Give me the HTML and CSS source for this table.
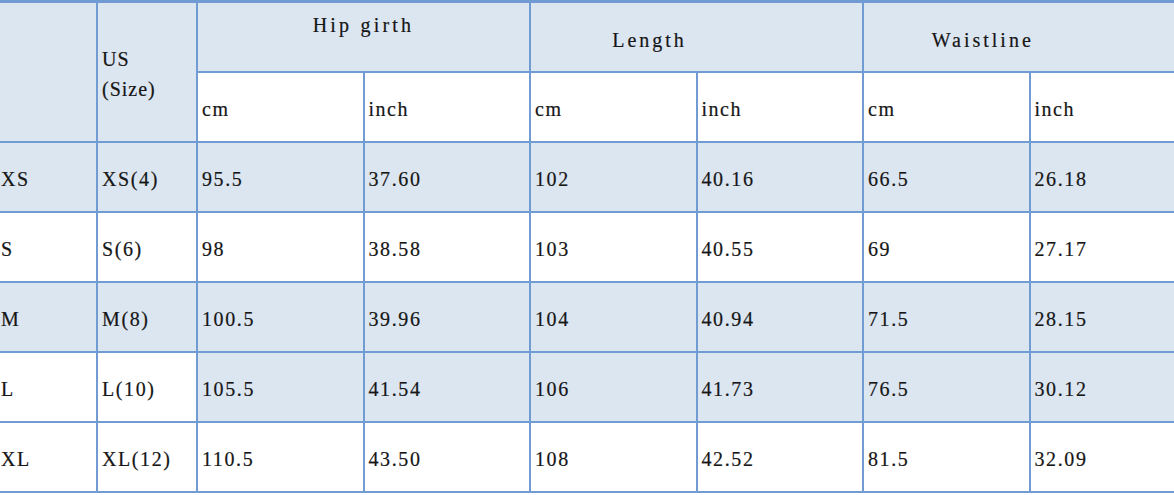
FILE: index.html
```html
<!DOCTYPE html>
<html>
<head>
<meta charset="utf-8">
<title>Size chart</title>
<link rel="stylesheet" href="styles.css">
</head>
<body>
<table class="chart">
  <colgroup>
    <col class="c-size">
    <col class="c-us">
    <col class="c-num"><col class="c-num">
    <col class="c-num"><col class="c-num">
    <col class="c-num"><col class="c-last">
  </colgroup>
  <thead>
    <tr>
      <th rowspan="2" class="shade"></th>
      <th rowspan="2" class="shade us">US<br>(Size)</th>
      <th colspan="2" class="shade group hip">Hip girth</th>
      <th colspan="2" class="shade group offset">Length</th>
      <th colspan="2" class="shade group offset">Waistline</th>
    </tr>
    <tr>
      <th class="unit">cm</th><th class="unit">inch</th>
      <th class="unit">cm</th><th class="unit">inch</th>
      <th class="unit">cm</th><th class="unit">inch</th>
    </tr>
  </thead>
  <tbody>
    <tr class="shade">
      <td>XS</td><td>XS(4)</td><td>95.5</td><td>37.60</td><td>102</td><td>40.16</td><td>66.5</td><td>26.18</td>
    </tr>
    <tr>
      <td>S</td><td>S(6)</td><td>98</td><td>38.58</td><td>103</td><td>40.55</td><td>69</td><td>27.17</td>
    </tr>
    <tr class="shade">
      <td>M</td><td>M(8)</td><td>100.5</td><td>39.96</td><td>104</td><td>40.94</td><td>71.5</td><td>28.15</td>
    </tr>
    <tr>
      <td>L</td><td>L(10)</td><td class="shade">105.5</td><td class="shade">41.54</td><td class="shade">106</td><td class="shade">41.73</td><td class="shade">76.5</td><td class="shade">30.12</td>
    </tr>
    <tr>
      <td>XL</td><td>XL(12)</td><td>110.5</td><td>43.50</td><td>108</td><td>42.52</td><td>81.5</td><td>32.09</td>
    </tr>
  </tbody>
</table>
</body>
</html>
```

FILE: styles.css
```css
html, body {
  margin: 0;
  padding: 0;
  background: #ffffff;
  overflow: hidden;
}

body {
  width: 1174px;
  height: 495px;
}

.chart {
  border-collapse: collapse;
  table-layout: fixed;
  width: 1200px;
  margin-left: -5px;
  font-family: "Liberation Serif", "Times New Roman", serif;
  font-size: 20px;
  letter-spacing: 1.6px;
  color: #161616;
  -webkit-text-stroke: 0.2px #161616;
}

.c-size { width: 101px; }
.c-us { width: 100px; }
.c-num { width: 166.5px; }
.c-last { width: 167px; }

.chart tr {
  height: 70px;
}

.chart th,
.chart td {
  border: 2px solid #719cd3;
  padding: 6px 0 0 5px;
  text-align: left;
  vertical-align: middle;
  font-weight: normal;
  white-space: nowrap;
  overflow: hidden;
}

.chart thead tr:first-child th {
  border-top-width: 3px;
}

.shade,
.shade td {
  background: #dce6f1;
}

.chart th.us {
  line-height: 30px;
  padding-top: 4px;
  padding-left: 4px;
  letter-spacing: 1px;
}

.chart th.group {
  text-align: center;
  letter-spacing: 3px;
  padding: 8px 0 0 0;
}

.chart th.offset {
  padding-right: 94px;
}

.chart th.hip {
  letter-spacing: 3.2px;
  padding: 0 0 22px 0;
}

.chart th.unit {
  background: #ffffff;
  padding-top: 6px;
  padding-left: 4px;
  letter-spacing: 1.5px;
}

.chart td {
  padding-left: 4px;
}
```
